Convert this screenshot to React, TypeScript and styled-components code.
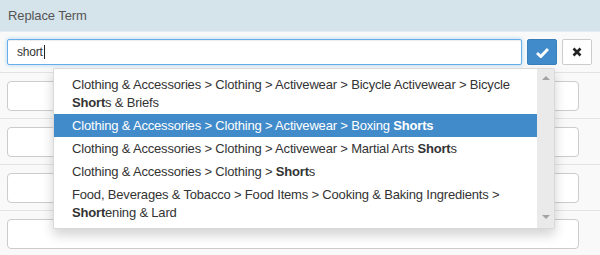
import React from 'react';
import styled, { createGlobalStyle } from 'styled-components';

const GlobalStyle = createGlobalStyle`
  html, body {
    margin: 0;
    padding: 0;
    background: #f9f9f9;
    font-family: "Liberation Sans", Arial, sans-serif;
    font-size: 13px;
    color: #333;
  }
`;

type Suggestion = { parts: { text: string; bold?: boolean }[] };

const suggestions: Suggestion[] = [
  {
    parts: [
      { text: 'Clothing & Accessories > Clothing > Activewear > Bicycle Activewear > Bicycle ' },
      { text: 'Short', bold: true },
      { text: 's & Briefs' },
    ],
  },
  {
    parts: [
      { text: 'Clothing & Accessories > Clothing > Activewear > Boxing ' },
      { text: 'Shorts', bold: true },
    ],
  },
  {
    parts: [
      { text: 'Clothing & Accessories > Clothing > Activewear > Martial Arts ' },
      { text: 'Short', bold: true },
      { text: 's' },
    ],
  },
  {
    parts: [
      { text: 'Clothing & Accessories > Clothing > ' },
      { text: 'Short', bold: true },
      { text: 's' },
    ],
  },
  {
    parts: [
      { text: 'Food, Beverages & Tobacco > Food Items > Cooking & Baking Ingredients > ' },
      { text: 'Short', bold: true },
      { text: 'ening & Lard' },
    ],
  },
];

export default function App(): JSX.Element {
  return (
    <Panel>
      <GlobalStyle />
      <Header>Replace Term</Header>
      <EditRow>
        <SearchBox>
          short
          <Caret />
        </SearchBox>
        <OkButton type="button">
          <svg width="13" height="11" viewBox="0 0 13 11">
            <path d="M1 6 L4.8 9.5 L12 2" stroke="#fff" strokeWidth="3" fill="none" />
          </svg>
        </OkButton>
        <CancelButton type="button">
          <svg width="10" height="10" viewBox="0 0 10 10">
            <path d="M1.5 1.5 L8.5 8.5 M8.5 1.5 L1.5 8.5" stroke="#222" strokeWidth="2.6" fill="none" />
          </svg>
        </CancelButton>
        <Dropdown>
          <List>
            {suggestions.map((s, i) => (
              <Item key={i} active={i === 1}>
                {s.parts.map((p, j) => (p.bold ? <b key={j}>{p.text}</b> : <span key={j}>{p.text}</span>))}
              </Item>
            ))}
          </List>
          <ScrollTrack>
            <Arrow dir="up" />
            <Arrow dir="down" />
          </ScrollTrack>
        </Dropdown>
      </EditRow>
      {[0, 1, 2, 3].map((n) => (
        <Row key={n}>
          <RowInput />
        </Row>
      ))}
    </Panel>
  );
}

const Panel = styled.div`
  width: 600px;
  height: 255px;
  overflow: hidden;
  background: #f9f9f9;
`;

const Header = styled.div`
  height: 31px;
  display: flex;
  align-items: center;
  padding-left: 8px;
  background: #d5e4eb;
  border-bottom: 1px solid #e2ecf1;
  color: #555;
  font-size: 13px;
  letter-spacing: -0.1px;
`;

const EditRow = styled.div`
  position: relative;
  display: flex;
  gap: 5px;
  padding: 7px 8px 7px 7px;
  border-bottom: 1px solid #e3e3e3;
`;

const SearchBox = styled.div`
  flex: 1;
  height: 26px;
  box-sizing: border-box;
  display: flex;
  align-items: center;
  padding-left: 9px;
  background: #fff;
  border: 1px solid #66afe9;
  border-radius: 2px;
  box-shadow: inset 0 1px 1px rgba(0, 0, 0, 0.075), 0 0 4px rgba(102, 175, 233, 0.5);
  font-size: 12px;
  letter-spacing: -0.2px;
  color: #333;
`;

const Caret = styled.span`
  display: inline-block;
  width: 1px;
  height: 14px;
  margin-left: 1px;
  background: #222;
`;

const OkButton = styled.button`
  width: 30px;
  height: 26px;
  padding: 0;
  display: flex;
  align-items: center;
  justify-content: center;
  background: #428bca;
  border: 1px solid #3a7fbd;
  border-radius: 2px;
`;

const CancelButton = styled(OkButton)`
  background: #fff;
  border-color: #ccc;
`;

const Dropdown = styled.div`
  position: absolute;
  top: 36px;
  left: 53px;
  width: 502px;
  height: 161px;
  box-sizing: border-box;
  display: flex;
  background: #fff;
  border: 1px solid rgba(0, 0, 0, 0.15);
  border-radius: 2px;
  box-shadow: 0 6px 12px rgba(0, 0, 0, 0.175);
  overflow: hidden;
  z-index: 10;
`;

const List = styled.div`
  flex: 1;
  padding-top: 4px;
  overflow: hidden;
`;

const Item = styled.div<{ active?: boolean }>`
  padding: 3px 20px 2px 18px;
  line-height: 18px;
  font-size: 13px;
  letter-spacing: -0.18px;
  color: ${(p) => (p.active ? '#fff' : '#333')};
  background: ${(p) => (p.active ? '#428bca' : 'transparent')};
`;

const ScrollTrack = styled.div`
  width: 17px;
  display: flex;
  flex-direction: column;
  justify-content: space-between;
  align-items: center;
  padding: 7px 0 9px;
  background-color: #f0f0f0;
  background-image: radial-gradient(#e2e2e2 0.6px, transparent 0.8px);
  background-size: 2px 2px;
`;

const Arrow = styled.div<{ dir: 'up' | 'down' }>`
  width: 0;
  height: 0;
  border-left: 4px solid transparent;
  border-right: 4px solid transparent;
  ${(p) => (p.dir === 'up' ? 'border-bottom: 4px solid #a3a3a3;' : 'border-top: 4px solid #a3a3a3;')}
`;

const Row = styled.div`
  height: 46px;
  box-sizing: border-box;
  padding: 8px 21px 0 7px;
  border-bottom: 1px solid #e3e3e3;
`;

const RowInput = styled.div`
  height: 30px;
  box-sizing: border-box;
  background: #fff;
  border: 1px solid #ccc;
  border-radius: 4px;
`;
